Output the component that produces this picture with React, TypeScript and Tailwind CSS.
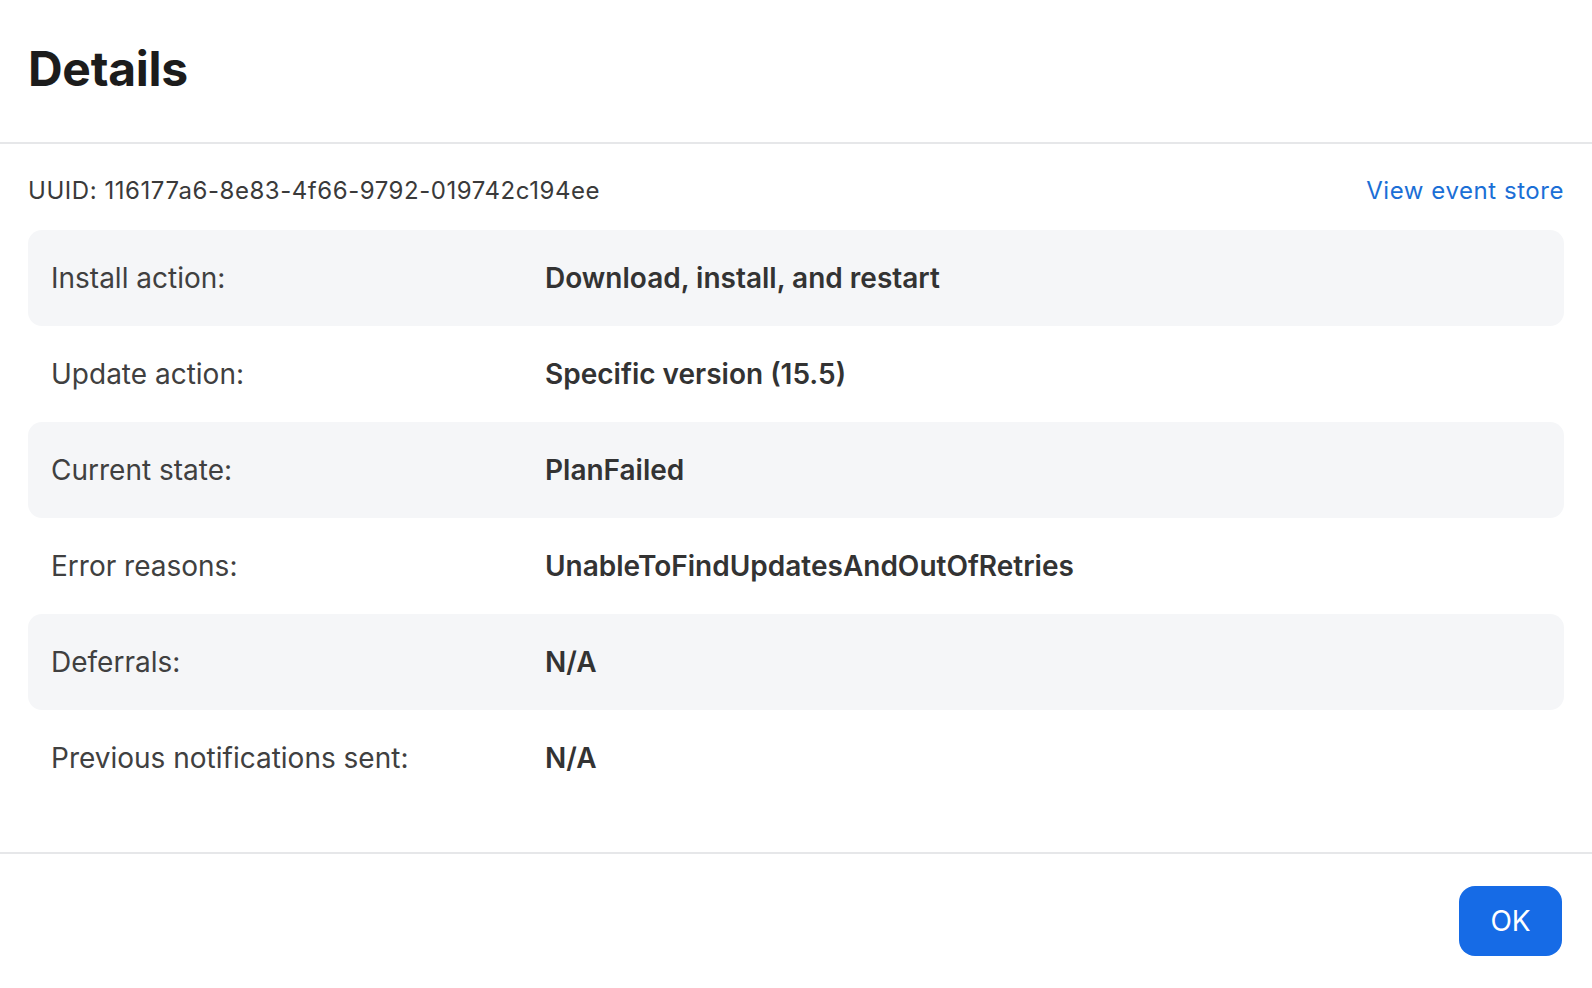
import React from 'react';

interface Row {
  label: string;
  value: string;
}

const rows: Row[] = [
  { label: 'Install action:', value: 'Download, install, and restart' },
  { label: 'Update action:', value: 'Specific version (15.5)' },
  { label: 'Current state:', value: 'PlanFailed' },
  { label: 'Error reasons:', value: 'UnableToFindUpdatesAndOutOfRetries' },
  { label: 'Deferrals:', value: 'N/A' },
  { label: 'Previous notifications sent:', value: 'N/A' },
];

export default function App() {
  return (
    <div className="w-[1592px] h-[988px] bg-white flex flex-col font-['Inter',sans-serif] text-[#333333]">
      {/* Header */}
      <div className="h-[144px] px-[28px] pb-[5px] flex items-center border-b-2 border-[#e6e7e9]">
        <h1 className="text-[48px] leading-none font-bold text-[#1c1c1c] tracking-[-0.3px]">Details</h1>
      </div>

      {/* Body */}
      <div className="flex-1 px-[28px] pt-[31px]">
        <div className="flex items-center justify-between h-[32px] text-[24px]">
          <span className="text-[#3a3a3a] tracking-[0.55px]">UUID: 116177a6-8e83-4f66-9792-019742c194ee</span>
          <a className="text-[#1b6fd6] tracking-[0.55px] cursor-pointer">View event store</a>
        </div>

        <div className="mt-[23px] flex flex-col">
          {rows.map((row, i) => (
            <div
              key={row.label}
              className={`h-[96px] flex items-center rounded-[14px] px-[23px] text-[28px] ${i % 2 === 0 ? 'bg-[#f5f6f8]' : ''}`}
            >
              <span className="w-[494px] shrink-0 text-[#404040]">{row.label}</span>
              <span className="font-semibold text-[#333333]">{row.value}</span>
            </div>
          ))}
        </div>
      </div>

      {/* Footer */}
      <div className="h-[136px] border-t-2 border-[#e6e7e9] px-[30px] flex items-start justify-end pt-[32px]">
        <button className="w-[103px] h-[70px] rounded-[16px] bg-[#166be6] text-white text-[28px]">OK</button>
      </div>
    </div>
  );
}
